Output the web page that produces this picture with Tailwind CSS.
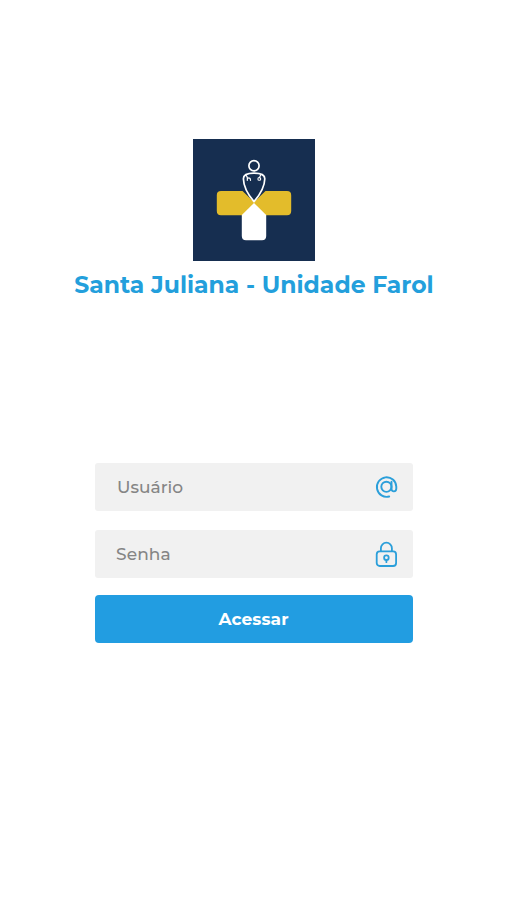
<!DOCTYPE html>
<html lang="pt-BR">
<head>
<meta charset="utf-8">
<title>Santa Juliana - Unidade Farol</title>
<script src="https://cdn.jsdelivr.net/npm/@tailwindcss/browser@4"></script>
</head>
<body class="bg-white">
<main class="flex h-[900px] w-[507px] flex-col items-center overflow-hidden bg-white pt-[139px] font-['Montserrat','Inter',sans-serif]">
  <svg class="h-[122px] w-[122px] shrink-0" viewBox="0 0 122 122" fill="none">
    <rect width="122" height="122" fill="#162e50"/>
    <path d="M28 52H49.5L61 63L72.5 52H94Q98.2 52 98.2 56.2V72Q98.2 76.2 94 76.2H28Q23.8 76.2 23.8 72V56.2Q23.8 52 28 52Z" fill="#e3bc2b"/>
    <path d="M61 64L73.2 76V97Q73.2 101.2 69 101.2H53Q48.8 101.2 48.8 97V76Z" fill="#fff"/>
    <g stroke="#fff" stroke-width="1.7" stroke-linecap="round" stroke-linejoin="round">
      <circle cx="61" cy="26.8" r="5.1"/>
      <path d="M61 62.6C57 58 50.6 49.5 50.4 39.8C50.4 36.5 54 34.2 61 34.2S71.8 36.5 71.8 39.8C71.6 49.5 65 58 61 62.6Z"/>
      <path d="M53 36.3C54.5 37.5 54.7 38.5 54.2 41.3M54.3 41C54.3 38.2 57.6 38.2 57.5 41.3M67.6 36.3L66.4 38.8" stroke-width="1.2"/>
      <circle cx="66.3" cy="39.9" r="1.4" stroke-width="1.1"/>
    </g>
  </svg>
  <h1 class="mt-[6px] h-[36px] whitespace-nowrap pl-px text-[23.5px] font-bold leading-[36px] text-[#239fdc]">Santa Juliana - Unidade Farol</h1>
  <form class="mt-[160px] flex w-[318px] flex-col">
    <label class="flex h-[48px] items-center justify-between rounded-[3px] bg-[#f1f1f1] pl-[22.5px] pr-[14px]">
      <span class="pt-[2px] text-[17px] font-medium text-[#858585]">Usuário</span>
      <svg class="h-[24px] w-[24px]" viewBox="0 0 24 24" fill="none" stroke="#2b9fda" stroke-width="1.9" stroke-linecap="round">
        <circle cx="11.4" cy="11.8" r="5.1"/>
        <path d="M16.5 6.7V14C16.5 17.2 21.3 17.2 21.3 13.5V11.6A9.7 9.8 0 1 0 14.2 21.5"/>
      </svg>
    </label>
    <label class="mt-[19px] flex h-[48px] items-center justify-between rounded-[3px] bg-[#f1f1f1] pl-[21.5px] pr-[14px]">
      <span class="pt-[2px] text-[17px] font-medium tracking-[0.1px] text-[#858585]">Senha</span>
      <svg class="h-[26px] w-[24px]" viewBox="0 0 24 26" fill="none" stroke="#2b9fda" stroke-width="1.8" stroke-linecap="round">
        <rect x="1.7" y="10.4" width="19.4" height="14.6" rx="3"/>
        <path d="M5.9 10.2V7.2A5.5 5.5 0 0 1 16.9 7.2V10.2M11.4 18.9V21.2"/>
        <circle cx="11.4" cy="16.7" r="2.3"/>
      </svg>
    </label>
    <button type="button" class="mt-[17px] h-[48px] rounded-[4px] bg-[#229de1] pt-[2px] text-[17px] font-bold tracking-[0.1px] text-white">Acessar</button>
  </form>
</main>
</body>
</html>
